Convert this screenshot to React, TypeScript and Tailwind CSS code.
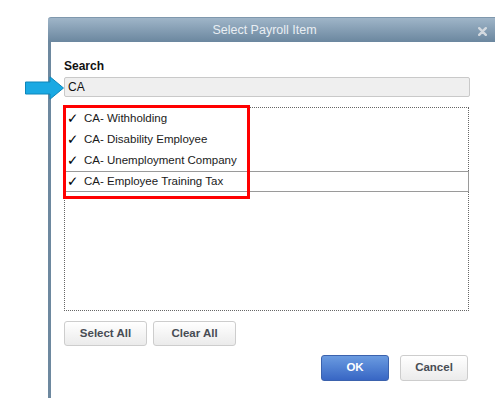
import { useState } from 'react';

const items = [
  'CA- Withholding',
  'CA- Disability Employee',
  'CA- Unemployment Company',
  'CA- Employee Training Tax',
];

export default function App() {
  const [query, setQuery] = useState('CA');
  const [checked, setChecked] = useState<Set<number>>(new Set([0, 1, 2, 3]));
  const [active, setActive] = useState(3);

  function toggle(i: number) {
    setChecked(prev => {
      const next = new Set(prev);
      next.has(i) ? next.delete(i) : next.add(i);
      return next;
    });
    setActive(i);
  }

  return (
    <div className="relative w-[502px] h-[403px] bg-white overflow-hidden font-['Liberation_Sans',Arial,sans-serif]">
      <div className="ml-[48px] mt-[17px] w-[447px] h-[381px] flex flex-col">
        {/* title bar */}
        <div className="h-[25px] shrink-0 rounded-tl-[3px] bg-gradient-to-b from-[#9fb5c8] to-[#6b879f] border-t border-[#7f98ad] flex items-center justify-center pr-[14px] relative">
          <span className="text-[12.5px] text-[#e9eef3] mt-[1px]">Select Payroll Item</span>
          <svg className="absolute right-[8px] top-[9px]" width="9" height="9" viewBox="0 0 9 9">
            <path d="M1.2 1.2 L7.8 7.8 M7.8 1.2 L1.2 7.8" stroke="#d3d9df" strokeWidth="2.4" strokeLinecap="round" />
          </svg>
        </div>

        {/* body */}
        <div className="flex-1 border-l-[3px] border-[#6d889f] pl-[13px] pt-[17px]">
          <div className="text-[12px] leading-[14px] font-bold text-[#111]">Search</div>
          <input
            className="mt-[4px] block w-[406px] h-[20px] bg-[#efefef] border border-[#c9c9c9] rounded-[2px] px-[3px] text-[12px] text-[#111] outline-none"
            value={query}
            onChange={e => setQuery(e.target.value)}
          />

          <div className="mt-[10px] w-[405px] h-[204px] border border-dotted border-[#666]">
            {items.map((name, i) => (
              <div
                key={name}
                onClick={() => toggle(i)}
                className={
                  'h-[21px] flex items-center text-[11.5px] text-[#1a1a1a] cursor-default -mx-px border ' +
                  (active === i ? 'border-[#9a9a9a]' : 'border-transparent')
                }
              >
                <span className="w-[19px] pl-[2px] text-[#000] font-['DejaVu_Sans',sans-serif] text-[13.5px] leading-none">
                  {checked.has(i) ? '✓' : ''}
                </span>
                <span>{name}</span>
              </div>
            ))}
          </div>

          <div className="mt-[10px] flex gap-[6px]">
            <button className="w-[83px] h-[25px] rounded-[3px] border border-[#cdcdcd] bg-gradient-to-b from-white to-[#ebebeb] text-[11.5px] font-bold text-[#474c54]">
              Select All
            </button>
            <button className="w-[83px] h-[25px] rounded-[3px] border border-[#cdcdcd] bg-gradient-to-b from-white to-[#ebebeb] text-[11.5px] font-bold text-[#474c54]">
              Clear All
            </button>
          </div>

          <div className="mt-[9px] w-[404px] flex justify-end gap-[11px]">
            <button className="w-[68px] h-[26px] rounded-[3px] border border-[#3b62ad] bg-gradient-to-b from-[#6b9be0] to-[#3866c4] text-[11.5px] font-bold text-white">
              OK
            </button>
            <button className="w-[68px] h-[26px] rounded-[3px] border border-[#cdcdcd] bg-gradient-to-b from-white to-[#ebebeb] text-[11.5px] font-bold text-[#474c54]">
              Cancel
            </button>
          </div>
        </div>
      </div>

      {/* annotation arrow */}
      <svg className="absolute left-[25px] top-[76px]" width="40" height="24" viewBox="0 0 40 24">
        <path d="M0.5 6 H25 V0.8 L38.5 12 L25 23.2 V18 H0.5 Z" fill="#1aa9e3" stroke="#0d86ba" strokeWidth="1" />
      </svg>

      {/* annotation highlight */}
      <div className="absolute left-[63px] top-[105px] w-[187px] h-[94px] border-[3px] border-[#ff0000] pointer-events-none" />
    </div>
  );
}
